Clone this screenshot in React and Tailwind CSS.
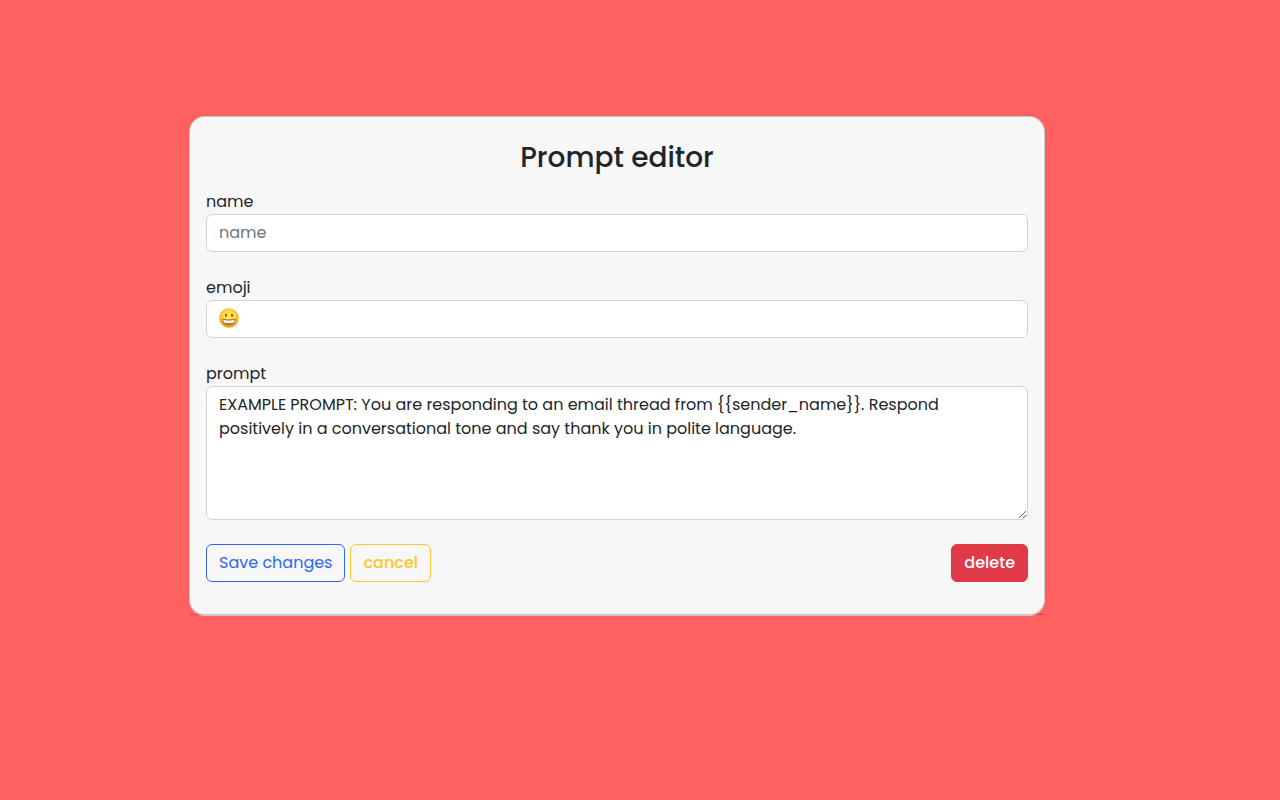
import React, { useState } from "react";

const fieldClass =
  "block w-full rounded-md border border-[#ced4da] bg-white px-3 py-1.5 text-base leading-6 text-[#212529] placeholder:text-[#6c757d] focus:outline-2 focus:outline-[#86b7fe]";

function GrinningFace() {
  return (
    <svg viewBox="0 0 40 40" className="h-5 w-5" aria-hidden="true">
      <defs>
        <radialGradient id="face" cx="50%" cy="42%" r="58%">
          <stop offset="0" stopColor="#fff05a" />
          <stop offset="0.6" stopColor="#fdd33a" />
          <stop offset="1" stopColor="#e88f14" />
        </radialGradient>
      </defs>
      <circle cx="20" cy="20" r="19.5" fill="url(#face)" />
      <ellipse cx="14" cy="14.5" rx="2" ry="3" fill="#7a4a10" />
      <ellipse cx="26" cy="14.5" rx="2" ry="3" fill="#7a4a10" />
      <path d="M6.5 21.5Q20 24.500 33.5 21.5Q33 34.500 20 34.500Q7 34.500 6.5 21.5Z" fill="#a1661c" />
      <path d="M8.500 23.500Q20 26 31.500 23.500Q31 27.500 29.500 29.500Q20 31.500 10.500 29.500Q9 27.500 8.500 23.500Z" fill="#f4efe6" />
    </svg>
  );
}

export default function App() {
  const [name, setName] = useState("");
  const [emoji, setEmoji] = useState("😀");
  const [prompt, setPrompt] = useState(
    "EXAMPLE PROMPT: You are responding to an email thread from {{sender_name}}. Respond positively in a conversational tone and say thank you in polite language."
  );
  const isDefault = emoji === "😀";

  return (
    <main className="min-h-screen bg-[#ff6060] pt-[116px] pr-[46px] font-['Poppins','Inter',sans-serif] text-base leading-6 text-[#212529]">
      <div className="relative isolate mx-auto w-full max-w-[856px] after:absolute after:inset-x-px after:bottom-px after:-z-10 after:h-px after:bg-[#c24d4d]">
        <form
          onSubmit={(e) => e.preventDefault()}
          className="rounded-2xl border border-b-2 border-[#c8c8c8] bg-[#f7f7f7] px-4 pt-[25px] pb-8"
        >
          <h1 className="mb-4 text-center text-[28px] leading-8 font-medium">Prompt editor</h1>
          <div className="mb-6">
            <label htmlFor="name" className="block">name</label>
            <input id="name" type="text" placeholder="name" value={name} onChange={(e) => setName(e.target.value)} className={fieldClass} />
          </div>
          <div className="mb-6">
            <label htmlFor="emoji" className="block">emoji</label>
            <div className="relative">
              <input
                id="emoji"
                type="text"
                value={emoji}
                onChange={(e) => setEmoji(e.target.value)}
                className={isDefault ? fieldClass + " [-webkit-text-fill-color:transparent]" : fieldClass}
              />
              {isDefault && (
                <span className="pointer-events-none absolute inset-y-0 left-[13px] flex items-center pb-0.5">
                  <GrinningFace />
                </span>
              )}
            </div>
          </div>
          <div className="mb-6">
            <label htmlFor="prompt" className="block">prompt</label>
            <textarea id="prompt" rows={5} spellCheck={false} value={prompt} onChange={(e) => setPrompt(e.target.value)} className={fieldClass} />
          </div>
          <div className="flex items-center gap-[5px]">
            <button type="submit" className="rounded-md border border-[#2f66f6] px-3 py-1.5 text-[#2f66f6]">Save changes</button>
            <button type="button" className="rounded-md border border-[#fdc52f] px-3 py-1.5 font-medium text-[#fdc52f]">cancel</button>
            <button type="button" className="ml-auto rounded-md border border-[#e03948] bg-[#e03948] px-3 py-1.5 font-medium text-white">delete</button>
          </div>
        </form>
      </div>
    </main>
  );
}
